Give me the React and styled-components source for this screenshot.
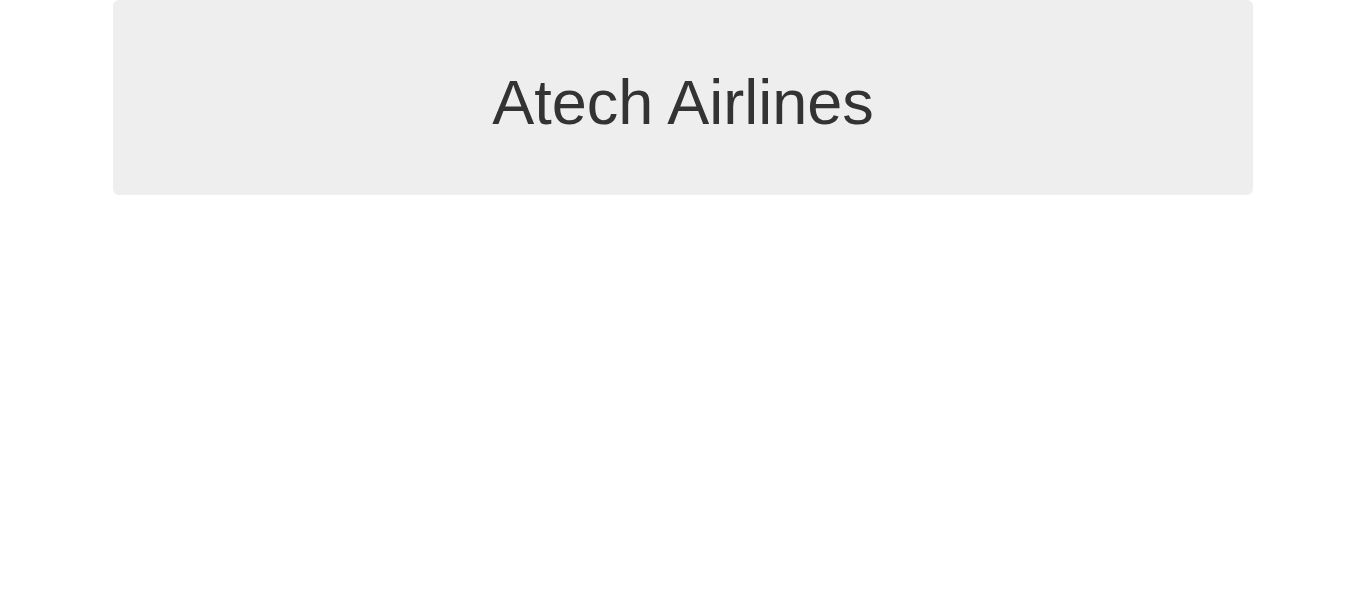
import React from "react";
import styled, { createGlobalStyle } from "styled-components";

const Global = createGlobalStyle`
  html, body { margin: 0; padding: 0; background: #fff; }
  body {
    font-family: "Liberation Sans", Arial, Helvetica, sans-serif;
    font-size: 14px;
    line-height: 1.42857;
    color: #333;
  }
  * { box-sizing: border-box; }
`;

const Container = styled.div`
  width: 1170px;
  margin: 0 auto;
  padding: 0 15px;
`;

const Jumbotron = styled.div`
  background: #eeeeee;
  border-radius: 6px;
  padding: 48px 60px;
  text-align: center;
`;

const Title = styled.h1`
  margin: 20px 0 10px;
  font-size: 63px;
  font-weight: 500;
  line-height: 1.1;
  color: #333;
`;

export default function App() {
  return (
    <>
      <Global />
      <Container>
        <Jumbotron>
          <Title>Atech Airlines</Title>
        </Jumbotron>
      </Container>
    </>
  );
}
